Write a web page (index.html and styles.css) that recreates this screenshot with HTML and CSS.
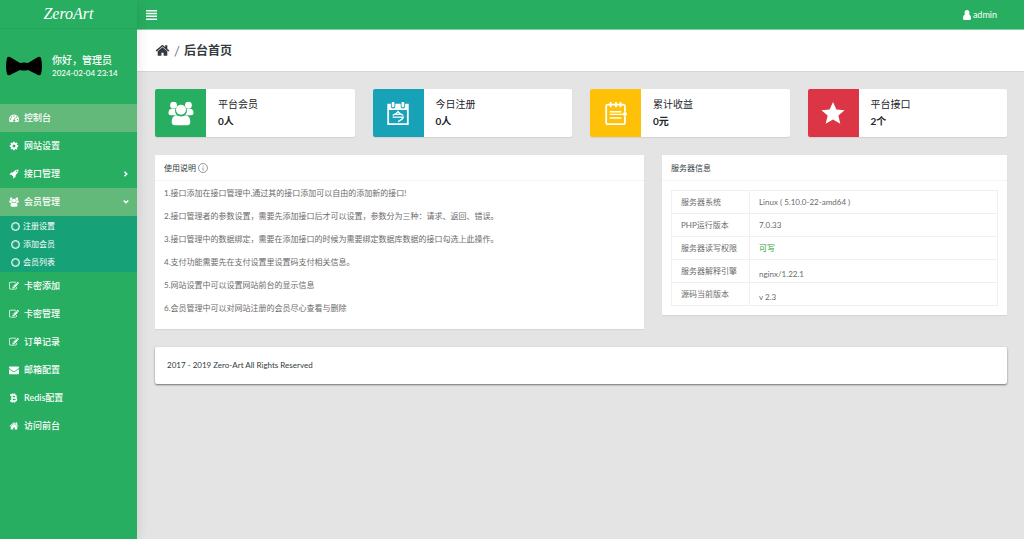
FILE: index.html
```
<!DOCTYPE html>
<html lang="zh-CN">
<head>
<meta charset="utf-8">
<title>后台首页</title>
<link rel="stylesheet" href="styles.css">
</head>
<body>
<svg class="sprite" aria-hidden="true">
  <symbol id="home" viewBox="0 0 1792 1792"><path d="M1472 992v480q0 26-19 45t-45 19h-384v-384h-256v384h-384q-26 0-45-19t-19-45v-480q0-1 .5-3t.5-3l575-474 575 474q1 2 1 6zm223-69l-62 74q-8 9-21 11h-3q-13 0-21-7l-692-577-692 577q-12 8-24 7-13-2-21-11l-62-74q-8-10-7-23.5t11-21.5l719-599q32-26 76-26t76 26l244 204v-195q0-14 9-23t23-9h192q14 0 23 9t9 23v408l219 182q10 8 11 21.5t-7 23.5z"/></symbol>
  <symbol id="edit" viewBox="0 0 1792 1792"><path d="M888 1184l116-116-152-152-116 116v56h96v96h56zm440-720q-16-16-33 1l-350 350q-17 17-1 33t33-1l350-350q17-17 1-33zm80 594v190q0 119-84.500 203.500t-203.500 84.500h-832q-119 0-203.500-84.500t-84.500-203.500v-832q0-119 84.500-203.500t203.500-84.500h832q63 0 117 25 15 7 18 23 3 17-9 29l-49 49q-14 14-32 8-23-6-45-6h-832q-66 0-113 47t-47 113v832q0 66 47 113t113 47h832q66 0 113-47t47-113v-126q0-13 9-22l64-64q15-15 35-7t20 29zm-96-738l288 288-672 672h-288v-288zm444 132l-92 92-288-288 92-92q28-28 68-28t68 28l152 152q28 28 28 68t-28 68z"/></symbol>
  <symbol id="cog" viewBox="0 0 1792 1792"><path d="M1152 896q0-106-75-181t-181-75-181 75-75 181 75 181 181 75 181-75 75-181zm512-109v222q0 12-8 23t-20 13l-185 28q-19 54-39 91 35 50 107 138 10 12 10 25t-9 23q-27 37-99 108t-94 71q-12 0-26-9l-138-108q-44 23-91 38-16 136-29 186-7 28-36 28h-222q-14 0-24.500-8.500t-11.500-21.500l-28-184q-49-16-90-37l-141 107q-10 9-25 9-14 0-25-11-126-114-165-168-7-10-7-23 0-12 8-23 15-21 51-66.500t54-70.500q-27-50-41-99l-183-27q-13-2-21-12.500t-8-23.500v-222q0-12 8-23t19-13l186-28q14-46 39-92-40-57-107-138-10-12-10-24 0-10 9-23 26-36 98.500-107.500t94.500-71.500q13 0 26 10l138 107q44-23 91-38 16-136 29-186 7-28 36-28h222q14 0 24.500 8.500t11.500 21.500l28 184q49 16 90 37l142-107q9-9 24-9 13 0 25 10 129 119 165 170 7 8 7 22 0 12-8 23-15 21-51 66.500t-54 70.500q26 50 41 98l183 28q13 2 21 12.500t8 23.500z"/></symbol>
  <symbol id="mail" viewBox="0 0 1792 1792"><path d="M1792 710v794q0 66-47 113t-113 47h-1472q-66 0-113-47t-47-113v-794q44 49 101 87 362 246 497 345 57 42 92.500 65.500t94.500 48 110 24.500h2q51 0 110-24.500t94.500-48 92.500-65.500q170-123 498-345 57-39 100-87zm0-294q0 79-49 151t-122 123q-376 261-468 325-10 7-42.500 31t-54 38.500-52 32.500-57.500 27-50 9h-2q-23 0-50-9t-57.500-27-52-32.500-54-38.500-42.500-31q-91-64-262-182.500t-205-142.500q-62-42-117-115.500t-55-136.500q0-78 41.500-130t118.500-52h1472q65 0 112.500 47t47.500 113z"/></symbol>
  <symbol id="gauge" viewBox="0 0 20 20"><path fill-rule="evenodd" d="M10 3a10 10 0 0 1 8.600 15H1.400A10 10 0 0 1 10 3zM4.500 11.500a1.400 1.400 0 1 0-2.800 1.500 1.400 1.400 0 0 0 2.800-1.500zM6.500 8a1.400 1.400 0 1 0-2.800 0 1.400 1.400 0 0 0 2.800 0zM11.400 5.900a1.400 1.400 0 1 0-2.800 0 1.400 1.400 0 0 0 2.800 0zM16.400 8a1.400 1.400 0 1 0-2.800 0 1.400 1.400 0 0 0 2.800 0zM18.300 12.900a1.400 1.400 0 1 0-2.800 0 1.400 1.400 0 0 0 2.800 0zM12 9l-1.500 4a2.200 2.200 0 1 0 1.200.4L13.200 9.400z"/></symbol>
  <symbol id="rocket" viewBox="0 0 20 20"><path fill-rule="evenodd" d="M19 1C14 1 11 3 8.500 6.500L4 7 1 12l4-.4L8.400 15 8 19l5-3 .5-4.500C17 9 19 6 19 1zM15.500 3.200a1.300 1.300 0 1 1 0 2.600 1.300 1.300 0 0 1 0-2.600z"/></symbol>
  <symbol id="group" viewBox="0 0 28 26"><circle cx="6" cy="4" r="3.700"/><circle cx="22" cy="4" r="3.700"/><path d="M3.500 8h4.500a7.500 7.500 0 0 0 1.500 7H3Q.5 15 .5 12.500.5 9 3.500 8zM24.500 8H20a7.500 7.500 0 0 1-1.500 7H25q2.500 0 2.500-2.500Q27.500 9 24.500 8z"/><circle cx="14" cy="9" r="5.400"/><path d="M8.800 15Q14 17.500 19.200 15 24 16 24 22q0 4-4 4H8q-4 0-4-4 0-6 4.800-7z"/></symbol>
  <symbol id="coin" viewBox="0 0 20 20"><path fill="none" stroke="currentColor" stroke-width="3" d="M2 4h8q4 0 4 3t-4 3H6h5q4 0 4 3t-4 3H2M6 4v12M7 1v3M11 1v3M7 16v3M11 16v3"/></symbol>
</svg>

<div class="app">
  <aside class="side">
    <a class="logo" href="#">ZeroArt</a>
    <div class="user">
      <svg class="tie" viewBox="0 0 36 20"><path d="M1 2Q2 0 4 1l10 6q4-1 8 0l10-6q2-1 3 1 2 8 0 16-1 2-3 1l-10-5q-4 1-8 0L4 19q-2 1-3-1-2-8 0-16z"/></svg>
      <div>
        <div class="hello">你好，管理员</div>
        <time class="time">2024-02-04 23:14</time>
      </div>
    </div>
    <nav class="menu">
      <a class="item on" href="#"><svg class="ico"><use href="#gauge"/></svg>控制台</a>
      <a class="item" href="#"><svg class="ico"><use href="#cog"/></svg>网站设置</a>
      <a class="item" href="#"><svg class="ico"><use href="#rocket"/></svg>接口管理<svg class="arrow" viewBox="0 0 8 8"><path d="M2 1l3 3-3 3"/></svg></a>
      <a class="item on" href="#"><svg class="ico"><use href="#group"/></svg>会员管理<svg class="arrow" viewBox="0 0 8 8"><path d="M1 2l3 3 3-3"/></svg></a>
      <div class="sub">
        <a href="#">注册设置</a>
        <a href="#">添加会员</a>
        <a href="#">会员列表</a>
      </div>
      <a class="item" href="#"><svg class="ico"><use href="#edit"/></svg>卡密添加</a>
      <a class="item" href="#"><svg class="ico"><use href="#edit"/></svg>卡密管理</a>
      <a class="item" href="#"><svg class="ico"><use href="#edit"/></svg>订单记录</a>
      <a class="item" href="#"><svg class="ico"><use href="#mail"/></svg>邮箱配置</a>
      <a class="item" href="#"><svg class="ico"><use href="#coin"/></svg>Redis配置</a>
      <a class="item" href="#"><svg class="ico"><use href="#home"/></svg>访问前台</a>
    </nav>
  </aside>

  <div class="page">
    <header class="top">
      <button class="toggle" type="button" aria-label="菜单"><svg viewBox="0 0 11 10"><path d="M0 0h11v1.500H0zM0 2.800h11v1.500H0zM0 5.600h11v1.500H0zM0 8.400h11v1.500H0z"/></svg></button>
      <a class="admin" href="#"><svg viewBox="0 0 16 20"><path d="M8 0a4.800 4.800 0 0 1 3.500 8.300Q16 10 16 17q0 3-3 3H3q-3 0-3-3 0-7 4.500-8.700A4.800 4.800 0 0 1 8 0z"/></svg>admin</a>
    </header>
    <div class="crumb">
      <a href="#" aria-label="首页"><svg><use href="#home"/></svg></a>
      <span class="slash">/</span>
      <h1>后台首页</h1>
    </div>
    <main class="content">
      <section class="stats">
        <div class="stat"><div class="tile green"><svg viewBox="0 0 28 26"><use href="#group"/></svg></div><div class="info"><div>平台会员</div><b>0人</b></div></div>
        <div class="stat"><div class="tile teal"><svg viewBox="0 0 28 28"><path fill-rule="evenodd" d="M2 3h4v3a2 2 0 0 0 5 0V3h6v3a2 2 0 0 0 5 0V3h4v24H2zM4 10v15h20V10z"/><rect x="7" y="1" width="3" height="6" rx="1"/><rect x="18" y="1" width="3" height="6" rx="1"/><path class="line mid" d="M8 16q4-1 6-4 2 3 6 4M11 15h6M8 18h12q-1 3-6 5"/></svg></div><div class="info"><div>今日注册</div><b>0人</b></div></div>
        <div class="stat"><div class="tile yellow"><svg viewBox="0 0 28 28"><path class="line bold" d="M24 12V6q0-2-2-2H5Q3 4 3 6v18q0 2 2 2h17q2 0 2-2v-7M8 1v6M14 1v6M19 1v6"/><path class="line mid" d="M7 12h13M7 15h17M7 19h13"/><circle cx="24" cy="14.500" r="2.200"/></svg></div><div class="info"><div>累计收益</div><b>0元</b></div></div>
        <div class="stat"><div class="tile red"><svg viewBox="0 0 28 28"><path d="M14 1l3.800 8.500 9.200.8-7 6 2.200 9.200L14 20.600l-8.200 4.900L8 16.300l-7-6 9.200-.8z"/></svg></div><div class="info"><div>平台接口</div><b>2个</b></div></div>
      </section>
      <section class="panels">
        <article class="panel guide">
          <h2>使用说明<svg class="tip" viewBox="0 0 20 20"><circle cx="10" cy="10" r="9"/><path d="M10 5v2M10 9v6"/></svg></h2>
          <div class="notes">
            <p>1.接口添加在接口管理中,通过其的接口添加可以自由的添加新的接口!</p>
            <p>2.接口管理者的参数设置，需要先添加接口后才可以设置，参数分为三种：请求、返回、错误。</p>
            <p>3.接口管理中的数据绑定，需要在添加接口的时候为需要绑定数据库数据的接口勾选上此操作。</p>
            <p>4.支付功能需要先在支付设置里设置码支付相关信息。</p>
            <p>5.网站设置中可以设置网站前台的显示信息</p>
            <p>6.会员管理中可以对网站注册的会员尽心查看与删除</p>
          </div>
        </article>
        <article class="panel server">
          <h2>服务器信息</h2>
          <div class="wrap">
            <table>
              <tr><th scope="row">服务器系统</th><td>Linux ( 5.10.0-22-amd64 )</td></tr>
              <tr><th scope="row">PHP运行版本</th><td>7.0.33</td></tr>
              <tr><th scope="row">服务器读写权限</th><td class="ok">可写</td></tr>
              <tr><th scope="row">服务器解释引擎</th><td class="low">nginx/1.22.1</td></tr>
              <tr><th scope="row">源码当前版本</th><td class="low">v 2.3</td></tr>
            </table>
          </div>
        </article>
      </section>
      <footer class="foot">2017 - 2019 Zero-Art All Rights Reserved</footer>
    </main>
  </div>
</div>
</body>
</html>
```
FILE: styles.css
```
* { box-sizing: border-box; }
body {
  margin: 0;
  background: #e4e4e4;
  color: #343a40;
  font: 8px/12px Lato, "Noto Sans CJK SC", sans-serif;
}
a { color: inherit; text-decoration: none; }
h1, h2, p { margin: 0; }
svg { fill: currentColor; flex: none; }
.sprite { display: none; }
.app { display: flex; min-height: 100vh; }

.side {
  flex: 0 0 137px;
  background: #27ae60;
  color: #fff;
  box-shadow: 0 0 12px rgba(0, 0, 0, .12);
  z-index: 1;
}
.logo {
  display: flex;
  align-items: center;
  justify-content: center;
  height: 29px;
  border-bottom: 1px solid #25a75b;
  font: italic 16px/20px "Liberation Serif", serif;
}
.user {
  display: flex;
  align-items: center;
  gap: 10px;
  height: 75px;
  padding: 0 6px 2px;
}
.tie { width: 36px; height: 20px; fill: #000; }
.hello { font-size: 10px; line-height: 14px; font-weight: 500; }
.time { display: block; line-height: 12px; font-weight: 500; }
.item {
  display: flex;
  align-items: center;
  gap: 5px;
  height: 28px;
  padding: 0 8px 0 9px;
  font-size: 9px;
  font-weight: 500;
}
.item.on { background: #62b97a; }
.ico { width: 10px; height: 10px; }
.arrow {
  width: 6px;
  height: 6px;
  margin-left: auto;
  fill: none;
  stroke: #fff;
  stroke-width: 2;
}
.sub { padding: 1px 0; background: #16a276; }
.sub a {
  display: flex;
  align-items: center;
  gap: 3px;
  height: 18px;
  padding-left: 11px;
}
.sub a::before {
  content: "";
  width: 7px;
  height: 7px;
  border: 1px solid #fff;
  border-radius: 50%;
  box-shadow: inset 0 0 0 1px rgba(255, 255, 255, .4);
}

.page { flex: 1; min-width: 0; }
.top {
  display: flex;
  align-items: center;
  justify-content: space-between;
  height: 30px;
  padding: 0 27px 0 9px;
  background: #27ae60;
  border-bottom: 1px solid #7dcea0;
  color: #fff;
}
.toggle { padding: 0; border: 0; background: none; color: #fff; }
.toggle svg { display: block; width: 11px; height: 10px; }
.admin { display: flex; align-items: center; gap: 2px; font-size: 9px; }
.admin svg { width: 8px; height: 10px; }
.crumb {
  display: flex;
  align-items: center;
  gap: 4px;
  height: 41px;
  padding: 0 18px;
  background: #fff;
  box-shadow: 0 1px 1px rgba(0, 0, 0, .06);
}
.crumb a { display: flex; }
.crumb svg { width: 15px; height: 15px; }
.slash { font-size: 13px; color: #6c757d; }
h1 { font-size: 12px; line-height: 16px; }

.content { display: grid; gap: 18px; padding: 18px 17px 18px 18px; }
.stats { display: grid; grid-template-columns: repeat(4, 1fr); gap: 18px; }
.stat {
  display: flex;
  overflow: hidden;
  background: #fff;
  border-radius: 2px;
  box-shadow: 0 1px 1px rgba(0, 0, 0, .08);
}
.tile {
  display: flex;
  align-items: center;
  justify-content: center;
  width: 51px;
  height: 48px;
  color: #fff;
}
.tile svg { width: 26px; height: 25px; }
.green { background: #27ae60; }
.teal { background: #17a2b8; }
.yellow { background: #ffc107; }
.red { background: #dc3545; }
.line { fill: none; stroke: currentColor; }
.mid { stroke-width: 1.5; }
.bold { stroke-width: 2; }
.info { padding: 7px 12px; font-size: 10px; line-height: 17px; color: #212529; }
.info b { display: block; }

.panels { display: flex; align-items: flex-start; gap: 18px; }
.panel { min-width: 0; background: #fff; box-shadow: 0 1px 1px rgba(0, 0, 0, .06); }
.guide { flex: 489 1 0; }
.server { flex: 345 1 0; }
h2 {
  display: flex;
  align-items: center;
  gap: 2px;
  height: 26px;
  padding: 0 9px;
  border-bottom: 1px solid #f4f4f4;
  font-size: 8px;
  font-weight: 400;
}
.tip { width: 10px; height: 10px; fill: none; stroke: #777; stroke-width: 1.5; }
.notes { padding: 1px 9px 9px; color: #6b6b6b; }
.notes p { line-height: 23px; }
.wrap { padding: 9px; }
table { width: 100%; border-collapse: collapse; color: #6b6b6b; }
th, td {
  height: 23px;
  padding: 0 9px;
  border: 1px solid #f0f0f0;
  text-align: left;
  font-weight: 400;
}
th { width: 78px; white-space: nowrap; }
.ok { color: #28a030; }
.low { padding-bottom: 2px; vertical-align: bottom; }

.foot {
  padding: 12px;
  background: #fff;
  border-radius: 2px;
  box-shadow: 0 1px 2px rgba(0, 0, 0, .5);
  line-height: 13px;
}
```
